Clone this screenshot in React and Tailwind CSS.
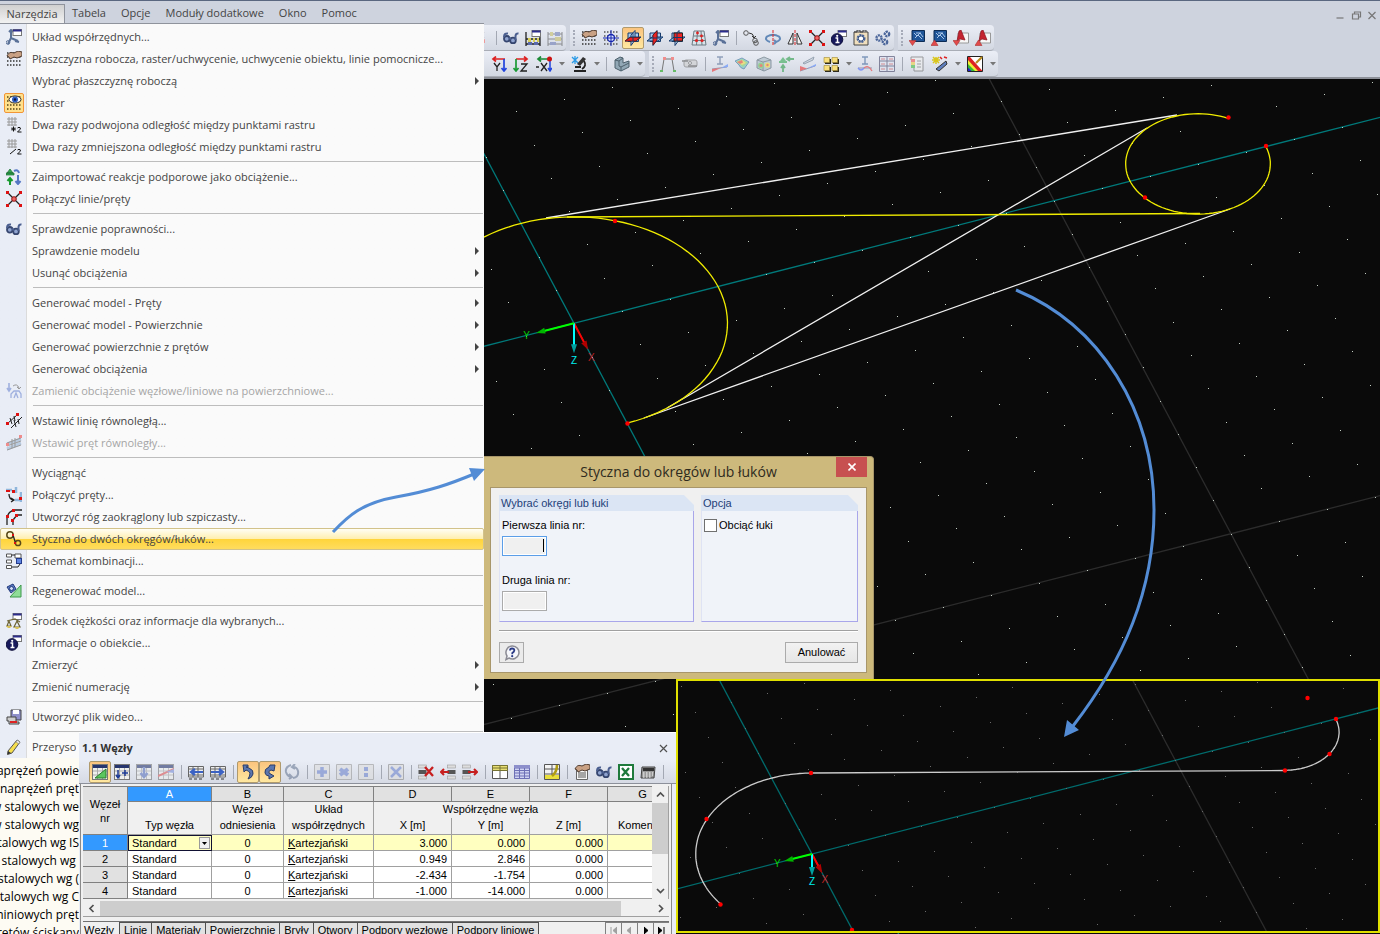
import { useState } from "react";

const menuBar = ["Tabela", "Opcje", "Moduły dodatkowe", "Okno", "Pomoc"];

const menuItems = [
  { label: "Układ współrzędnych...", icon: "axes" },
  {
    label: "Płaszczyzna robocza, raster/uchwycenie, uchwycenie obiektu, linie pomocnicze...",
    icon: "handGrid",
  },
  { label: "Wybrać płaszczyznę roboczą", sub: true },
  { label: "Raster", icon: "eyeGrid", checked: true },
  { label: "Dwa razy podwojona odległość między punktami rastru", icon: "gridDouble" },
  { label: "Dwa razy zmniejszona odległość między punktami rastru", icon: "gridHalf" },
  null,
  { label: "Zaimportować reakcje podporowe jako obciążenie...", icon: "importLoad" },
  { label: "Połączyć linie/pręty", icon: "joinLines" },
  null,
  { label: "Sprawdzenie poprawności...", icon: "glasses" },
  { label: "Sprawdzenie modelu", sub: true },
  { label: "Usunąć obciążenia", sub: true },
  null,
  { label: "Generować model - Pręty", sub: true },
  { label: "Generować model - Powierzchnie", sub: true },
  { label: "Generować powierzchnie z prętów", sub: true },
  { label: "Generować obciążenia", sub: true },
  {
    label: "Zamienić obciążenie węzłowe/liniowe na powierzchniowe...",
    icon: "convertLoad",
    disabled: true,
  },
  null,
  { label: "Wstawić linię równoległą...", icon: "parallelLine" },
  { label: "Wstawić pręt równoległy...", icon: "parallelMember", disabled: true },
  null,
  { label: "Wyciągnąć" },
  { label: "Połączyć pręty...", icon: "joinMembers" },
  { label: "Utworzyć róg zaokrąglony lub szpiczasty...", icon: "corner" },
  { label: "Styczna do dwóch okręgów/łuków...", icon: "tangent", selected: true },
  { label: "Schemat kombinacji...", icon: "scheme" },
  null,
  { label: "Regenerować model...", icon: "regenerate" },
  null,
  { label: "Środek ciężkości oraz informacje dla wybranych...", icon: "scales" },
  { label: "Informacje o obiekcie...", icon: "info" },
  { label: "Zmierzyć", sub: true },
  { label: "Zmienić numerację", sub: true },
  null,
  { label: "Utworzyć plik wideo...", icon: "video" },
  null,
  { label: "Przerysow", icon: "pencil", short: true },
];

const toolbarTop = [
  { items: ["cut", "|", "glasses", "abacusWindow", "abacus-"] },
  {
    grip: true,
    items: [
      "handGrid", "crossGrid", "planeXY!", "planeYZ", "planeXZ", "redGrid", "axes", "|",
      "copyCircles", "rotate", "mirror", "joinLines", "info", "gearBox", "gears",
    ],
  },
  { grip: true, items: ["blueDown", "blueUp", "redDown", "redUp"] },
];

const toolbarBottom = [
  { pad: true, items: ["axisY", "axisZ", "axisX>", "microscope>", "|", "solid>"] },
  {
    grip: true,
    items: [
      "frame", "camera-", "|", "beamLoad-", "surface-", "solidColor-", "supports-", "slope-",
      "squares>", "beamWave-", "resultGrid-", "|", "legend-", "wand>", "palette>",
    ],
  },
];

const tableToolbar = [
  "tblGreen!", "tblPlus", "tblDown-", "tblDiag-", "|", "tblLeft", "tblRight", "|", "undoArrow!",
  "redoArrow!", "refresh-", "|", "tblAdd-", "tblStar-", "tblDots-", "|", "tblX-", "|", "rowDelete",
  "rowLeft", "rowRight", "|", "tblYellow", "tblBlue", "|", "tblPen", "|", "handList", "glasses",
  "excel", "calculator", "|",
];

const nodes = [
  { nr: 1, x: "3.000", y: "0.000", z: "0.000" },
  { nr: 2, x: "0.949", y: "2.846", z: "0.000" },
  { nr: 3, x: "-2.434", y: "-1.754", z: "0.000" },
  { nr: 4, x: "-1.000", y: "-14.000", z: "0.000" },
];

const tabs = [
  "Linie", "Materiały", "Powierzchnie", "Bryły", "Otwory", "Podpory węzłowe", "Podpory liniowe",
];

const modules = [
  "naprężeń powie",
  "a naprężeń pręt",
  "w stalowych we",
  "w stalowych wg",
  "stalowych wg IS",
  "y stalowych wg\u00a0",
  "stalowych wg (",
  "stalowych wg C",
  "miniowych pręt",
  "retów ściskany",
];

const dotGrid = (color = "#333") => (
  <path
    d="M1 2H16M1 6H16M1 10H16M1 14H16"
    stroke={color}
    strokeWidth="1.4"
    strokeDasharray="1.5 1.5"
  />
);

const miniWindow = (
  <>
    <rect x="7" y="0.5" width="8.5" height="6" fill="#fff" stroke="#777" />
    <rect x="7" y="0.5" width="8.5" height="2" fill="#2c2c8c" />
  </>
);

const hand = (
  <path
    d="M1 5C3 1 5 1 8 2L12 0L16 1V5L11 7L8 6L4 8L3 6Z"
    fill="#c9a184"
    stroke="#4d3a2e"
    strokeWidth="1"
  />
);

const sheet = (
  <>
    <rect x="0.5" y="0.5" width="15" height="15" fill="#eef0ee" stroke="#777" />
    <path d="M1 7H15M1 11H15M5.5 4V15M10.5 4V15" stroke="#aaa" />
    <rect x="1" y="1" width="14" height="3" fill="#26356e" />
  </>
);

const plane = (
  <>
    <path d="M3 3H13.5V11.5H3Z" fill="#a9cdf0" stroke="#163b6d" />
    <path d="M6 5L10 0.5V10L6 15.5Z" fill="#c3def7" stroke="#163b6d" />
    <path d="M0 11L5 7H16L11 11Z" fill="#8dbceb" stroke="#163b6d" />
  </>
);

const solidShape = (
  <>
    <path d="M1 4L8 1L15 4V12L8 15L1 12Z" fill="#a8bac5" stroke="#556772" />
    <path d="M1 4L7 6L15 4M7 6V15" stroke="#556772" />
  </>
);

const rowBlock = (
  <>
    <rect x="0.5" y="1" width="8" height="3" fill="#ddd" stroke="#999" strokeWidth="0.6" />
    <rect x="0.5" y="6" width="8" height="4" fill="#555" />
    <rect x="0.5" y="12" width="8" height="3" fill="#ddd" stroke="#999" strokeWidth="0.6" />
  </>
);

const blueScreen = (
  <>
    <path d="M3 0.5H15.5V11.5H3Z" fill="#1f5598" stroke="#0d2c55" />
    <path d="M5 3L8 6L11 3L14 7M6 8L9 5L13 9M7 3H12" stroke="#b9d4f2" strokeWidth="0.9" />
  </>
);

const redScreen = (
  <>
    <path d="M5 3H15.5V13H5Z" fill="#f7f7f7" stroke="#999" />
    <path d="M6 1L8 0L12 10L7 9L4 11Z" fill="#c42430" stroke="#8c1420" strokeWidth="0.7" />
  </>
);

const icons = {
  axes: (
    <>
      <path d="M5 1V9L2 15M5 9L12 12M3 3L5 1L7 3M9 12L13 13" stroke="#5a7198" strokeWidth="2" />
      <circle cx="2" cy="13.5" r="1.8" stroke="#5a7198" />
      {miniWindow}
    </>
  ),
  handGrid: (
    <>
      {dotGrid()}
      {hand}
    </>
  ),
  eyeGrid: (
    <>
      {dotGrid("#5a4713")}
      <ellipse cx="9" cy="4.5" rx="6" ry="3.5" fill="#fff" stroke="#222" />
      <circle cx="9" cy="4.5" r="3" fill="#2f5fc4" />
      <circle cx="9" cy="4.5" r="1.2" fill="#0a1540" />
    </>
  ),
  gridDouble: (
    <>
      <path d="M3 0V9M6 0V9M9 0V9M1 2H11M1 5H11M1 8H11" stroke="#999" />
      <path d="M5 12H10M7.5 9.5V14.5M6 10.5L9 13.5M9 10.5L6 13.5" stroke="#111" />
      <path d="M11.5 11Q13 9.5 14.5 11Q14.5 12.5 11.5 15H15.5" stroke="#111" />
    </>
  ),
  gridHalf: (
    <>
      <path d="M3 0V9M6 0V9M9 0V9M1 2H11M1 5H11M1 8H11" stroke="#999" />
      <path d="M4 15L10 10" stroke="#111" />
      <path d="M11.5 11Q13 9.5 14.5 11Q14.5 12.5 11.5 15H15.5" stroke="#111" />
    </>
  ),
  importLoad: (
    <>
      <path d="M4 0L7 4H1ZM0 4H8V6H0Z" fill="#35a853" stroke="#1c6a30" strokeWidth="0.7" />
      <path d="M4 16V10M1.5 12L4 9L6.5 12" stroke="#179a2e" strokeWidth="2" />
      <path d="M8 2Q12 0 13 4M12 6V14M9.5 12L12 15L14.5 12" stroke="#5577c4" strokeWidth="2" />
    </>
  ),
  joinLines: (
    <>
      <path d="M2 2L14 14M14 2L2 14" stroke="#222" strokeWidth="1.3" />
      <path d="M0 0H3V3H0ZM13 0H16V3H13ZM0 13H3V16H0ZM13 13H16V16H13Z" fill="#d11" />
      <circle cx="8" cy="8" r="2.3" fill="#e66" stroke="#911" />
    </>
  ),
  glasses: (
    <>
      <circle cx="3.8" cy="8.8" r="2.8" fill="#8fa3cf" stroke="#36466f" strokeWidth="1.8" />
      <circle cx="10" cy="10.4" r="2.8" fill="#8fa3cf" stroke="#36466f" strokeWidth="1.8" />
      <path d="M1 7Q1 3 5 3.500M12.500 10V6Q13 3 15.500 3.500M6 8L8 9" stroke="#4b5f90" strokeWidth="2" />
    </>
  ),
  convertLoad: (
    <>
      <path d="M3 0V7M1 5L3 8L5 5" stroke="#9fb0df" strokeWidth="1.6" />
      <path d="M7 3Q11 0 13 5M11 4L13 6L15 4" stroke="#999" />
      <path d="M5 15V11L8 8H13L15 11V15M8 15L10 10L12 15" stroke="#9fb0df" strokeWidth="1.3" />
    </>
  ),
  parallelLine: (
    <>
      <path d="M1 11L11 2M5 15L16 4M4 5L6 11M8 3L9 8M8 7L10 14M12 6L13 11" stroke="#222" />
      <path d="M0 9H3V12H0ZM10 0H13V3H10Z" fill="#d11" />
    </>
  ),
  parallelMember: (
    <>
      <path d="M1 9L15 4M1 14L15 8" stroke="#b9cbe0" strokeWidth="3" />
      <path d="M1 8L15 3M1 11L15 6M1 15L15 10M6 4V13M9 3V12" stroke="#999" />
      <path d="M0 8H3V11H0ZM13 0H16V3H13Z" fill="#ee8c8c" />
    </>
  ),
  joinMembers: (
    <>
      <path d="M0 3H6M10 0V6M15 5V15M9 13H15" stroke="#8fb6dc" strokeWidth="2.5" />
      <path d="M0 3H4V5H0ZM6 3H9V6H6ZM13 10H16V13H13Z" fill="#d11" />
      <path d="M3 7Q3 12 7 13M5 11L8 13L5 15" stroke="#222" strokeWidth="1.3" />
    </>
  ),
  corner: (
    <>
      <path d="M1 16V9Q2 2 9 1H16M7 16V11L11 6H16" stroke="#222" strokeWidth="1.3" />
      <path d="M0 6H3V9H0ZM6 0H9V3H6ZM5 10H8V13H5ZM9 5H12V8H9Z" fill="#d11" />
    </>
  ),
  tangent: (
    <>
      <circle cx="4" cy="4" r="3.2" stroke="#5a4a18" strokeWidth="1.5" />
      <circle cx="12" cy="12" r="2.6" stroke="#5a4a18" strokeWidth="1.5" />
      <path d="M7 4L9.5 12" stroke="#222" strokeWidth="1.3" />
      <path d="M6 3H8V5H6ZM8 11H10V13H8Z" fill="#d11" />
    </>
  ),
  scheme: (
    <>
      <path
        d="M0.5 1H5.5V4H0.5ZM0.5 7H5.5V10H0.5ZM0.5 12.5H5.5V15.5H0.5ZM9 1H15V5H9Z"
        fill="#fff"
        stroke="#555"
      />
      <path d="M6 2H9M6 14H12L14 11" stroke="#222" />
      <rect x="10.5" y="5.5" width="5" height="5" fill="#5d83df" stroke="#223a8c" />
    </>
  ),
  regenerate: (
    <>
      <path d="M15 2V14H4Z" fill="#8fdc98" stroke="#3d9a4a" />
      <path d="M1 4L7 1L10 6L5 10Z" fill="#5b7bc4" stroke="#223a7c" />
      <circle cx="5.5" cy="5.5" r="2" fill="#cdd9f5" stroke="#223a7c" />
    </>
  ),
  scales: (
    <>
      {miniWindow}
      <path d="M1 8L9 6L14 9M3 8L1 13H5ZM11 8L8 14H14Z" stroke="#6d6436" strokeWidth="1.2" />
      <path d="M0 13H6L4 15H2ZM8 14H14L12 16H10Z" fill="#d8c258" />
    </>
  ),
  info: (
    <>
      {miniWindow}
      <circle cx="6" cy="9.5" r="5.8" fill="#17195c" stroke="#0b0c38" />
      <path d="M4.5 8H6.5V12.5M4.5 12.5H8.5" stroke="#fff" strokeWidth="1.5" />
      <circle cx="6.2" cy="5.8" r="1.1" fill="#fff" />
    </>
  ),
  video: (
    <>
      <path d="M5 1H15V11H5Z" fill="#8e8fc9" stroke="#444" />
      <path d="M7 1H13V5H7Z" fill="#fff" />
      <path d="M1 8H10V13H13V15H3V12H1Z" fill="#ccc" stroke="#444" />
      <path d="M4 12H11V14H4Z" fill="#d22" />
    </>
  ),
  pencil: (
    <>
      <path d="M2 12L11 1L14 3L6 14L1.5 15.5Z" fill="#f6de4d" stroke="#555" />
      <path d="M1.5 15.5L2 12L5 14Z" fill="#333" />
      <path d="M11 1L14 3L13 5L10 3Z" fill="#eee" stroke="#777" strokeWidth="0.6" />
    </>
  ),
  cut: (
    <>
      <path d="M0 2L4 8M4 2L0 8" stroke="#a99" />
      <path d="M0 12L5 9V13H0Z" fill="#e99" />
    </>
  ),
  abacusWindow: (
    <>
      <path d="M1 2V16M15 2V16M1 9H15M1 14H15" stroke="#222" strokeWidth="1.3" />
      <path d="M3 8H6V12H3ZM8 8H10V12H8ZM12 8H14V12H12Z" fill="#d8cf55" />
      <path d="M3 12H7V15H3ZM9 12H13V15H9Z" fill="#5968ad" />
      {miniWindow}
    </>
  ),
  abacus: (
    <>
      <path d="M1 2V16M15 2V16M1 4H15M1 9H15M1 14H15" stroke="#555" />
      <path d="M3 2H6V6H3ZM8 7H14V11H8Z" fill="#c6bd68" />
      <path d="M8 2H13V6H8ZM3 12H9V15H3Z" fill="#6f7db5" />
    </>
  ),
  crossGrid: (
    <>
      {dotGrid("#555")}
      <circle cx="8" cy="8" r="3.5" fill="#dfe7fb" stroke="#1726b0" strokeWidth="1.3" />
      <path d="M8 0V16M0 8H16" stroke="#1726b0" />
    </>
  ),
  planeXY: (
    <>
      {plane}
      <path d="M0 11L5 7.5H15L11 11Z" fill="#e22" stroke="#611" strokeWidth="0.8" />
      <path d="M8 3V12" stroke="#163b6d" />
    </>
  ),
  planeYZ: (
    <>
      {plane}
      <path d="M6 5L10 1V10L6 15Z" fill="#e22" stroke="#611" strokeWidth="0.8" />
      <path d="M3 8H14" stroke="#163b6d" />
    </>
  ),
  planeXZ: (
    <>
      {plane}
      <path d="M5 3H13.5V11H5Z" fill="#e22" stroke="#222" />
      <path d="M8 3V11M5 7.5H13" stroke="#163b6d" />
    </>
  ),
  redGrid: (
    <>
      <path d="M3 1H13L15 15H1ZM2.5 6H13.5M2 10.5H14.5M6.5 1L5.5 15M10 1L11 15" fill="#d9e4ea" stroke="#6c7b83" />
      <circle cx="6.5" cy="3" r="1.4" fill="#d22" />
      <circle cx="10.5" cy="6" r="1.4" fill="#d22" />
      <circle cx="5.5" cy="10.5" r="1.6" fill="#d22" />
      <circle cx="11" cy="10.5" r="1.6" fill="#d22" />
    </>
  ),
  copyCircles: (
    <>
      <circle cx="3" cy="3" r="2.3" stroke="#555" />
      <circle cx="12" cy="10.5" r="2.3" stroke="#555" />
      <circle cx="13" cy="13" r="2.3" stroke="#555" />
      <path d="M6 3Q10 3 11 7M9 6L11 8L13 6" stroke="#333" />
    </>
  ),
  rotate: (
    <>
      <path d="M5 12Q-1 10 2 6.5Q8 3 14 6.5Q17 10 11 12M9 10L11 12L9 14" stroke="#6289b8" strokeWidth="2" />
      <path d="M8 0V16" stroke="#d22" strokeDasharray="3 1" />
    </>
  ),
  mirror: (
    <>
      <path d="M6 3V14H1ZM10 3V14H15Z" fill="#f4f4f4" stroke="#333" />
      <path d="M8 0V16" stroke="#d22" strokeDasharray="3 1" />
    </>
  ),
  gearBox: (
    <>
      <path d="M1 2H15V15H1Z" fill="#f0dfbd" stroke="#444" />
      <path d="M1 2H4V0H7V2H10V0H13V2" stroke="#444" />
      <circle cx="8" cy="8.5" r="3.4" fill="#fff" stroke="#4a659a" strokeWidth="2.2" strokeDasharray="2 0.8" />
      <circle cx="8" cy="8.5" r="2.7" stroke="#35507f" />
    </>
  ),
  gears: (
    <>
      <circle cx="4" cy="8" r="2.6" stroke="#4a659a" strokeWidth="2.4" strokeDasharray="2 0.7" />
      <circle cx="12" cy="4" r="2.2" stroke="#4a659a" strokeWidth="2.4" strokeDasharray="2 0.7" />
      <circle cx="10" cy="12" r="2.2" stroke="#4a659a" strokeWidth="2.4" strokeDasharray="2 0.7" />
    </>
  ),
  blueDown: (
    <>
      {blueScreen}
      <path d="M0 10.5H7L3.5 15.5Z" fill="#e24a4a" stroke="#a33" strokeWidth="0.6" />
    </>
  ),
  blueUp: (
    <>
      {blueScreen}
      <path d="M0 15.5H7L3.5 10Z" fill="#e24a4a" stroke="#a33" strokeWidth="0.6" />
    </>
  ),
  redDown: (
    <>
      {redScreen}
      <path d="M0 10.5H7L3.5 15.5Z" fill="#e24a4a" stroke="#a33" strokeWidth="0.6" />
    </>
  ),
  redUp: (
    <>
      {redScreen}
      <path d="M0 15.5H7L3.5 10Z" fill="#e24a4a" stroke="#a33" strokeWidth="0.6" />
    </>
  ),
  axisY: (
    <>
      <path d="M14 3H3M5 0.5L2 3L5 5.5" stroke="#d22" strokeWidth="1.7" />
      <path d="M13 3V14M10.5 12L13 15L15.5 12" stroke="#24d" strokeWidth="1.7" />
      <path d="M3 7L6 11L9 7M6 11V15" stroke="#222" strokeWidth="1.3" />
    </>
  ),
  axisZ: (
    <>
      <path d="M3 3H13M11 0.5L14 3L11 5.5" stroke="#d22" strokeWidth="1.7" />
      <path d="M3 3V14M0.5 12L3 15L5.5 12" stroke="#1a9a35" strokeWidth="1.7" />
      <path d="M8 8H14L8 15H14" stroke="#222" strokeWidth="1.3" />
    </>
  ),
  axisX: (
    <>
      <path d="M13 3H3M5 0.5L2 3L5 5.5" stroke="#1a8a35" strokeWidth="1.7" />
      <path d="M14 3V14M12 12L14 15L16 12" stroke="#24d" strokeWidth="1.5" />
      <circle cx="13.5" cy="3" r="2.5" fill="#c11" />
      <path d="M0 11H3M5 7L11 15M11 7L5 15" stroke="#222" strokeWidth="1.3" />
    </>
  ),
  microscope: (
    <>
      <path d="M1 1L7 7M7 1L1 7M4 0V8" stroke="#2b9be6" strokeWidth="1.3" />
      <path d="M12 1L15 3L9 10L6 8Z" fill="#333" />
      <path d="M13 5Q16 10 11 13M3 15H15M4 11H10" stroke="#222" strokeWidth="1.8" />
    </>
  ),
  solid: (
    <>
      <path d="M1 4L6 1L9 2V7L15 5V11L7 15L1 12Z" fill="#91a7b5" stroke="#4d606c" />
      <path d="M1 4L5 5V10L7 11L15 7M7 11V15M5 5L9 2" stroke="#4d606c" />
    </>
  ),
  frame: (
    <>
      <path d="M2 15L4 3H12L14 15" stroke="#777" />
      <path d="M3 1H6V4H3ZM11 1H14V4H11Z" fill="#ee8d8d" />
      <path d="M0 14H3V16H0ZM13 14H16V16H13Z" fill="#6b6" />
    </>
  ),
  camera: (
    <>
      <rect x="2" y="4" width="13" height="7" rx="2" fill="#ccc" stroke="#777" />
      <path d="M0 5H6M6 10H15" stroke="#555" strokeWidth="1.5" />
      <circle cx="8" cy="7" r="1.5" fill="#eee" stroke="#666" />
    </>
  ),
  beamLoad: (
    <>
      <path d="M5 1H11M8 1V8M5 8H11" stroke="#5a7198" strokeWidth="1.4" />
      <path d="M0 13L15 11" stroke="#668" />
      <path d="M0 13L9 12L0 16Z" fill="#e33" />
      <path d="M9 12L16 8V11Z" fill="#58f" />
    </>
  ),
  surface: (
    <>
      <path d="M1 5L8 2L15 6L10 13Q6 12 5 9Z" fill="#6cc8c0" stroke="#3a6f9c" />
      <path d="M2.5 5.500L8 3L14 6.500L9 11Z" fill="#7fd06c" />
      <path d="M3 6L8 4L12 7L8 9Z" fill="#f2da3d" />
      <path d="M3 6L8 4L9 6.500L6 8Z" fill="#e8482f" />
    </>
  ),
  solidColor: (
    <>
      {solidShape}
      <circle cx="5" cy="9.5" r="3" fill="#5fc861" />
      <circle cx="5" cy="9.5" r="1.6" fill="#e94d2c" />
      <circle cx="11.5" cy="9" r="2.6" fill="#f1db31" />
      <circle cx="11.5" cy="9" r="1.2" fill="#e94d2c" />
    </>
  ),
  supports: (
    <>
      <path d="M5 1L8 5H2ZM1 5H9V7H1Z" fill="#35a853" />
      <path d="M5 16V10M3 12L5 9L7 12M16 3H10M12 1L9 3L12 5" stroke="#2c9c48" strokeWidth="1.8" />
    </>
  ),
  slope: (
    <>
      <path d="M3 7L14 1L13 4L4 8Z" fill="#c9d3de" stroke="#66788a" />
      <path d="M0 15L15 10" stroke="#668" />
      <path d="M0 10V15L7 12.5Z" fill="#e33" />
      <path d="M7 12.5L16 8V10Z" fill="#58f" />
    </>
  ),
  squares: (
    <>
      <path d="M2 3H8V8H2ZM10 3H16V8H10ZM2 11H8V16H2ZM10 11H16V16H10Z" fill="#2e2a1c" />
      <path
        d="M1 1.5H6.500V6.500H1ZM9 1.5H14.500V6.500H9ZM1 9.500H6.500V14.500H1ZM9 9.500H14.500V14.500H9Z"
        fill="#fae07c"
        stroke="#a08a34"
        strokeWidth="0.6"
      />
    </>
  ),
  beamWave: (
    <>
      <path d="M5 1H11M8 1V8M5 8H11" stroke="#3f669b" strokeWidth="1.4" />
      <path d="M1 12H15" stroke="#668" />
      <path d="M1 12Q4 16 7 12" stroke="#46f" strokeWidth="1.3" />
      <path d="M7 12Q11 8 15 15" stroke="#e33" strokeWidth="1.3" />
    </>
  ),
  resultGrid: (
    <>
      <path d="M0.5 0.5H15.5V15.5H0.5ZM0.5 5H15.5M0.5 10H15.5M8 0V16" fill="#dfe4f2" stroke="#446" />
      <path d="M2 3H6M10 3H14M2 8H6M10 8H14M2 13H6M10 13H14" stroke="#c55" />
    </>
  ),
  legend: (
    <>
      <path d="M2 1H14V15H5V4H2Z" fill="#eee" stroke="#666" />
      <path d="M2 3H6V6H2Z" fill="#e55" />
      <path d="M2 6H6V9H2Z" fill="#ec4" />
      <path d="M2 9H6V12H2Z" fill="#4b4" />
      <path d="M8 5H12M8 8H12M8 11H12" stroke="#777" />
    </>
  ),
  wand: (
    <>
      <path d="M4 1V8M0 4H8M1 1L7 7M7 1L1 7" stroke="#d9c61c" strokeWidth="1.5" />
      <path d="M4 13L14 5L15 8L7 15Z" fill="#5f7fc0" stroke="#333" />
      <path d="M8 1L10 3M12 1L15 2" stroke="#d22" strokeWidth="1.5" />
    </>
  ),
  palette: (
    <>
      <path d="M0.5 0.5H15.5V15.5H0.5Z" fill="#fff" stroke="#222" />
      <path d="M1 1H3L15.500 15H1Z" fill="#d22" />
      <path d="M1 4L11 15H1Z" fill="#ee3" />
      <path d="M1 8L8 15H1Z" fill="#3b3" />
      <path d="M1 11.500L4.500 15H1Z" fill="#22c" />
      <path d="M9 7L15 1" stroke="#b58a1e" strokeWidth="2.2" />
    </>
  ),
  tblGreen: (
    <>
      {sheet}
      <path d="M14 5V14H3Z" fill="#5bc65f" stroke="#2a7d2e" />
    </>
  ),
  tblPlus: (
    <>
      {sheet}
      <path d="M4 6V13M2 11L4 14L6 11M8 9H14M11 6V12" stroke="#1c3a94" strokeWidth="1.5" />
    </>
  ),
  tblDown: (
    <>
      {sheet}
      <path d="M8 3V12M4.5 9L8 13L11.5 9" stroke="#5c74bd" strokeWidth="2.5" />
    </>
  ),
  tblDiag: (
    <>
      {sheet}
      <path d="M0 12L16 5" stroke="#d55" strokeWidth="2" />
      <path d="M8 8L16 5V9Z" fill="#7b90d8" />
    </>
  ),
  tblLeft: (
    <>
      <path d="M0.5 2.5H15.5V13H0.5ZM1 5H15M1 11H15M5 2V13M10 2V13" fill="#eee" stroke="#666" />
      <path d="M15 8H5M7 5L3 8L7 11" stroke="#3b62c4" strokeWidth="2.2" />
      <path d="M1 15H4M6 15H9M11 15H14" stroke="#333" />
    </>
  ),
  tblRight: (
    <>
      <path d="M0.5 2.5H15.5V13H0.5ZM1 5H15M1 11H15M5 2V13M10 2V13" fill="#eee" stroke="#666" />
      <path d="M1 8H11M9 5L13 8L9 11" stroke="#3b62c4" strokeWidth="2.2" />
      <path d="M1 15H4M6 15H9M11 15H14" stroke="#333" />
    </>
  ),
  undoArrow: (
    <path
      d="M3 1H8V3H6L9 4Q14 6 13 10Q12 14 8 15Q10 12 10 9Q9 7 6 6L4 8Z"
      fill="#5b76ae"
      stroke="#2c3d68"
      strokeWidth="1"
    />
  ),
  redoArrow: (
    <path
      d="M13 1H8L7 3Q2 5 3 9Q4 12 7 12V15L12 12L7 9Q6 7 9 6L12 7Z"
      fill="#5b76ae"
      stroke="#2c3d68"
      strokeWidth="1"
    />
  ),
  refresh: (
    <path d="M7 1Q1 3 2 8Q3 12 7 13M5 10L8 13L5 15M9 14Q15 13 14 7Q13 3 9 3M11 0L8 3L11 5" stroke="#6b7b96" strokeWidth="2" />
  ),
  tblAdd: (
    <>
      <path d="M0.5 0.5H15.5V15.5H0.5Z" fill="#ddd" stroke="#999" />
      <path d="M8 3V13M3 8H13" stroke="#6d84cc" strokeWidth="3.5" />
    </>
  ),
  tblStar: (
    <>
      <path d="M0.5 0.5H15.5V15.5H0.5Z" fill="#ddd" stroke="#999" />
      <path d="M4 5L12 11M12 5L4 11" stroke="#6d84cc" strokeWidth="4" />
    </>
  ),
  tblDots: (
    <>
      <path d="M0.5 0.5H15.5V15.5H0.5Z" fill="#ddd" stroke="#999" />
      <path d="M8 3V7M8 9V13" stroke="#6d84cc" strokeWidth="4" />
    </>
  ),
  tblX: (
    <>
      <path d="M0.5 0.5H15.5V15.5H0.5Z" fill="#ddd" stroke="#888" />
      <path d="M3 3L13 13M13 3L3 13" stroke="#6d84cc" strokeWidth="2.5" />
    </>
  ),
  rowDelete: (
    <>
      {rowBlock}
      <path d="M7 3L15 12M15 3L7 12" stroke="#c71f1f" strokeWidth="2.3" />
    </>
  ),
  rowLeft: (
    <>
      <g transform="translate(7 0)">{rowBlock}</g>
      <path d="M9 8H2M4 5L1 8L4 11" stroke="#c71f1f" strokeWidth="2" />
    </>
  ),
  rowRight: (
    <>
      {rowBlock}
      <path d="M6 8H14M12 5L15 8L12 11" stroke="#c71f1f" strokeWidth="2" />
    </>
  ),
  tblYellow: (
    <>
      <path d="M0.5 1.5H15.5V14.5H0.5ZM8 6V14" fill="#fff" stroke="#555" />
      <path d="M0.5 1.5H15.5V6.5H0.5ZM8 2V6M1 4H15" fill="#e9df73" stroke="#777433" />
    </>
  ),
  tblBlue: (
    <>
      <path d="M0.5 1.5H15.5V14.5H0.5ZM1 4H15M1 6.5H15M1 9H15M1 12H15M5.5 2V14M10.5 2V14" fill="#cfd3f2" stroke="#6c6fb5" />
      <path d="M0 1H16V4H0Z" fill="#8c8fcb" />
    </>
  ),
  tblPen: (
    <>
      <path d="M0.5 0.5H15.5V15.5H0.5ZM1 5H15M1 10H15M8 1V15" fill="#f4f4f4" stroke="#555" />
      <path d="M1 11H15V15H1Z" fill="#e9df3c" />
      <path d="M13 1Q13 8 8 12" stroke="#b09c13" strokeWidth="2.6" />
    </>
  ),
  handList: (
    <>
      <path d="M2.5 4.5H13.5V15.5H2.5Z" fill="#f6f6f6" stroke="#666" />
      <path d="M4 9H12M4 11H12M4 13H12" stroke="#555" />
      {hand}
    </>
  ),
  excel: (
    <>
      <path d="M1 1H15V15H1Z" fill="#fff" stroke="#1f7a3c" strokeWidth="2" />
      <path d="M4 4L11 12M11 4L4 12" stroke="#1f7a3c" strokeWidth="2.3" />
    </>
  ),
  calculator: (
    <>
      <path d="M2 3H15L14 14H1Z" fill="#9a9a9a" stroke="#444" />
      <path d="M3 4H14V7H3Z" fill="#333" />
      <path d="M3 9H13M3 11H13M3 13H12" stroke="#fff" strokeDasharray="1.5 1.5" strokeWidth="1.2" />
    </>
  ),
};

const Icon = ({ name }) => (
  <svg viewBox="0 0 16 16" fill="none" className="h-4 w-4 shrink-0" aria-hidden="true">
    {icons[name]}
  </svg>
);

const Separator = () => (
  <span className="flex w-2 shrink-0 justify-center">
    <span className="h-[14px] w-px bg-[#a3a8b3]" />
  </span>
);

// A trailing mark sets the state: "!" pressed, "-" disabled, ">" has a drop-down.
const ToolButton = ({ item }) => {
  if (item === "|") return <Separator />;

  const name = item.replace(/[!\->]$/, "");
  const pressed = item.endsWith("!");
  const disabled = item.endsWith("-");

  if (item.endsWith(">")) {
    return (
      <span className="flex h-[22px] w-[35px] shrink-0 items-center">
        <button aria-label={name} className="flex w-6 justify-center">
          <Icon name={name} />
        </button>
        <button aria-label={`${name} menu`} className="flex w-[11px] justify-center">
          <svg viewBox="0 0 6 4" className="h-1 w-[6px]">
            <path d="M0 0H6L3 3.5Z" fill="#777" />
          </svg>
        </button>
      </span>
    );
  }

  return (
    <button
      aria-label={name}
      disabled={disabled}
      className={`flex h-[22px] shrink-0 items-center justify-center ${
        name === "cut" ? "w-2" : "w-[22px]"
      } ${
        pressed
          ? "rounded-xs border border-[#b09a6c] bg-linear-to-b from-[#fbc47e] to-[#ffe8a0]"
          : ""
      } ${disabled ? "opacity-60" : ""}`}
    >
      <Icon name={name} />
    </button>
  );
};

const Toolbar = ({ groups }) => (
  <div className="flex h-[26px] gap-1">
    {groups.map((group, i) => (
      <div
        key={i}
        className={`flex h-[26px] items-center rounded-r border-b border-[#a9adb6] bg-linear-to-b from-[#ebeef6] to-[#d3d8e2] ${
          group.pad ? "pl-1" : ""
        }`}
      >
        {group.grip && (
          <span className="flex w-2 justify-center">
            <span className="h-4 border-l-2 border-dotted border-[#a6abb8]" />
          </span>
        )}
        {group.items.map((item, j) => (
          <ToolButton key={j} item={item} />
        ))}
      </div>
    ))}
  </div>
);

const MenuItem = ({ item }) => {
  if (!item) {
    return (
      <li className="h-2 pt-[3px] pr-px pl-[33px]">
        <div className="h-px bg-[#bdbdbd]" />
      </li>
    );
  }

  return (
    <li className="h-[22px]">
      <button
        disabled={item.disabled}
        className={`flex h-[22px] w-full items-center text-left whitespace-nowrap ${
          item.selected
            ? "rounded-xs border border-[#d2c28a] bg-[linear-gradient(to_bottom,#fffef4,#ffefb0_48%,#ffd53c_52%,#ffdc5e)]"
            : ""
        } ${item.disabled ? "text-[#a5a5a5]" : ""}`}
      >
        <span
          className={`mr-2 flex h-5 w-5 items-center justify-center ${
            item.selected ? "ml-[3px]" : "ml-1"
          } ${item.checked ? "rounded-xs border border-[#f29536] bg-[#ffe08c]" : ""}`}
        >
          {item.icon && <Icon name={item.icon} />}
        </span>
        <span className={item.short ? "w-11 overflow-hidden" : "flex-1"}>{item.label}</span>
        {item.sub && (
          <svg viewBox="0 0 4 8" className="mr-[5px] h-2 w-1">
            <path d="M0 0L4 4L0 8Z" fill="#444" />
          </svg>
        )}
      </button>
    </li>
  );
};

const project = (view, x, y) => [
  view.origin[0] + x * view.ux[0] + y * view.uy[0],
  view.origin[1] + x * view.ux[1] + y * view.uy[1],
];

const arcPoints = (view, cy, r, from, to) => {
  const points = [];
  for (let i = 0; i <= 90; i++) {
    const t = ((from + ((to - from) * i) / 90) * Math.PI) / 180;
    const [px, py] = project(view, r * Math.cos(t), cy + r * Math.sin(t));
    points.push(`${px.toFixed(1)},${py.toFixed(1)}`);
  }
  return points.join(" ");
};

const mainView = { origin: [90, 244.3], ux: [17.7, 33.3], uy: [-48, 12.26] };
const resultView = { origin: [134, 173], ux: [13.48, 25.3], uy: [-36.33, 9.37] };

const Line = ({ view, from, to, color }) => {
  const [x1, y1] = project(view, ...from);
  const [x2, y2] = project(view, ...to);
  return <line x1={x1} y1={y1} x2={x2} y2={y2} stroke={color} strokeWidth="1.3" />;
};

const Raster = ({ view, color }) => {
  const dots = [];
  for (let x = -16; x <= 26; x++) {
    for (let y = -30; y <= 10; y++) {
      const [px, py] = project(view, x, y);
      if (px >= 0 && px < 1600 && py >= 0 && py < 1000) {
        dots.push(`M${Math.round(px)} ${Math.round(py)}h1v1h-1z`);
      }
    }
  }
  return <path d={dots.join("")} fill={color} shapeRendering="crispEdges" />;
};

const AxisArrow = ({ x, y, angle, length, color, dark }) => (
  <g transform={`translate(${x} ${y}) rotate(${angle})`}>
    <path d={`M0 0H${length - 7}`} stroke={color} strokeWidth="2" />
    <path d={`M${length - 9} -3L${length} 0L${length - 9} 3Z`} fill={dark} />
  </g>
);

const Axes = ({ view, size }) => {
  const [x, y] = view.origin;
  return (
    <g fontFamily="Liberation Sans" fontSize="10" textAnchor="middle">
      <AxisArrow x={x} y={y} angle={62} length={size} color="#f00" dark="#b00000" />
      <AxisArrow x={x} y={y} angle={90} length={size} color="#0ff" dark="#00a0a0" />
      <AxisArrow x={x} y={y} angle={165.7} length={size * 1.3} color="#0f0" dark="#00b400" />
      <text x={x - size * 1.58} y={y + size * 0.4 + 4} fill="#0c0">Y</text>
      <text x={x + size * 0.58} y={y + size * 1.12 + 4} fill="#c02020">X</text>
      <text x={x} y={y + size * 1.23 + 4} fill="#0ee">Z</text>
    </g>
  );
};

const Points = ({ points }) =>
  points.map(([x, y]) => <circle key={`${x}-${y}`} cx={x} cy={y} r="2.2" fill="#f00" />);

const ModelCanvas = () => (
  <svg className="absolute inset-0 h-full w-full" aria-label="Model">
    <Line view={mainView} from={[10, 12]} to={[10, -20]} color="#2c2c2c" />
    <Line view={mainView} from={[-10, -10]} to={[30, -10]} color="#2c2c2c" />
    <Line view={mainView} from={[-20, 0]} to={[20, 0]} color="#00797a" />
    <Line view={mainView} from={[0, 6]} to={[0, -24]} color="#00797a" />
    <Raster view={mainView} color="#c3cec3" />
    <g fill="none" stroke="#f0f0f0" strokeWidth="1.3">
      <path d="M62 139L693 36M183 329L663 49M160 339L746 130" />
    </g>
    <g fill="none" stroke="#f0ec00" strokeWidth="1.3">
      <path d="M83 138L716 134.5" />
      <polyline points={arcPoints(mainView, 0, 3, 0, -288.4)} />
      <polyline points={arcPoints(mainView, -13, 1.414, 225, -90)} />
    </g>
    <Points points={[[143.5, 344.5], [131, 142], [744.5, 38.5], [782, 67], [661, 118.5]]} />
    <Axes view={mainView} size={30} />
  </svg>
);

const ResultCanvas = () => (
  <svg className="block h-full w-full" aria-label="Wynik">
    <Line view={resultView} from={[-10, -10]} to={[30, -10]} color="#2c2c2c" />
    <Line view={resultView} from={[-20, 0]} to={[20, 0]} color="#006b6c" />
    <Line view={resultView} from={[0, 6]} to={[0, -30]} color="#006b6c" />
    <Raster view={resultView} color="#6a6a6a" />
    <g fill="none" stroke="#ccc" strokeWidth="1.3">
      <path d="M133 92L607 89.5" />
      <polyline points={arcPoints(resultView, 0, 3, 71.6, 199.9)} />
      <polyline points={arcPoints(resultView, -13, 1.414, -90, 19.9)} />
    </g>
    <Points
      points={[
        [133, 92], [28.5, 138], [42.5, 223.5], [174, 249],
        [607, 89.5], [651.5, 73], [658, 38], [629.5, 17],
      ]}
    />
    <Axes view={resultView} size={22} />
  </svg>
);

const Group = ({ title, className, children }) => (
  <fieldset className={`min-w-0 ${className}`}>
    <legend className="block h-4 w-full bg-[#dbe5f4] pl-[2px] leading-4 text-[#1e3f78] [clip-path:polygon(0_0,calc(100%-10px)_0,100%_10px,100%_100%,0_100%)]">
      {title}
    </legend>
    <div className="h-[111px] border-r border-b border-l border-[#a9a6ea] border-l-[#dfe3f4] bg-[#f0f3f9] pt-[6px] pl-[2px]">
      {children}
    </div>
  </fieldset>
);

const TangentDialog = ({ onClose }) => {
  const [lines, setLines] = useState({ first: "", second: "" });
  const [trim, setTrim] = useState(false);

  const handleChange = (e) => {
    const { name, value } = e.target;
    setLines((prev) => ({ ...prev, [name]: value }));
  };

  return (
    <div
      role="dialog"
      className="absolute top-[377px] left-0 w-[390px] rounded-tr border-t border-r border-[#a8966a] bg-[#cdb97c] px-[6px] pb-[6px] font-['Liberation_Sans',sans-serif] text-[11px] text-black"
    >
      <div className="flex h-[30px] items-start">
        <h2 className="flex-1 pl-[31px] text-center font-['Open_Sans',sans-serif] text-[14px] leading-[30px] text-[#2f2b1e]">
          Styczna do okręgów lub łuków
        </h2>
        <button
          onClick={onClose}
          aria-label="Zamknij"
          className="flex h-5 w-[31px] items-center justify-center bg-[#c75050]"
        >
          <svg viewBox="0 0 8 8" className="h-2 w-2">
            <path d="M0.5 0.5L7.5 7.5M7.5 0.5L0.5 7.5" stroke="#fff" strokeWidth="1.6" />
          </svg>
        </button>
      </div>

      <div className="border border-[#a8966a] bg-[#f0f0f0] px-2 pt-[7px] pb-[9px]">
        <div className="flex gap-[7px]">
          <Group title="Wybrać okręgi lub łuki" className="w-[195px]">
            <label htmlFor="first" className="block leading-4">
              Pierwsza linia nr:
            </label>
            <div className="relative mt-[3px] w-[45px]">
              <input
                id="first"
                name="first"
                value={lines.first}
                onChange={handleChange}
                className="block h-5 w-full border border-[#5b9ee8] bg-[#f0f0f0] px-[3px] text-right caret-transparent inset-ring inset-ring-white outline-none"
              />
              <span className="pointer-events-none absolute top-[3px] right-[3px] h-[13px] w-px bg-black" />
            </div>
            <label htmlFor="second" className="mt-4 block leading-4">
              Druga linia nr:
            </label>
            <input
              id="second"
              name="second"
              value={lines.second}
              onChange={handleChange}
              className="mt-[3px] block h-5 w-[45px] border border-[#ababab] bg-[#f0f0f0] px-[3px] text-right inset-ring inset-ring-white outline-none"
            />
          </Group>
          <Group title="Opcja" className="flex-1">
            <label className="flex items-center gap-[2px] leading-4">
              <input
                type="checkbox"
                checked={trim}
                onChange={(e) => setTrim(e.target.checked)}
                className="h-[13px] w-[13px] appearance-none border border-[#707070] bg-white checked:bg-[#5b9ee8]"
              />
              Obciąć łuki
            </label>
          </Group>
        </div>

        <div className="mt-2 h-[2px] border-t border-[#a0a0a0] bg-white" />

        <div className="mt-[10px] flex justify-between">
          <button
            aria-label="Pomoc"
            className="flex h-[21px] w-[25px] items-center justify-center border border-[#ababab] bg-[#ebebeb]"
          >
            <svg viewBox="0 0 16 16" fill="none" className="h-4 w-4">
              <path d="M8 1A6.5 6.5 0 1 1 5 13L2 14.5L3 11A6.5 6.5 0 0 1 8 1Z" fill="#f6f7fb" stroke="#8b8b94" strokeWidth="1.5" />
              <path d="M6 5.5Q6 3.5 8 3.5Q10.5 3.5 10.3 5.5Q10 7 8.3 8V9.2" stroke="#2a3a86" strokeWidth="1.8" />
              <circle cx="8.2" cy="11.2" r="1.1" fill="#2a3a86" />
            </svg>
          </button>
          <button
            onClick={onClose}
            className="h-[21px] w-[73px] border border-[#ababab] bg-linear-to-b from-[#f2f2f2] to-[#e6e6e6]"
          >
            Anulować
          </button>
        </div>
      </div>
    </div>
  );
};

const Chevron = ({ d, width = "1.7" }) => (
  <svg viewBox="0 0 9 9" fill="none" className="h-[9px] w-[9px]">
    <path d={d} stroke="#505050" strokeWidth={width} />
  </svg>
);

const columnHead = "border-r border-b border-[#808080] bg-[#e1e1e1] font-normal";
const cell = "border-r border-b border-[#a0a0a0]";

const NodeTable = () => (
  <table className="w-[595px] table-fixed border-separate border-spacing-0 text-center leading-[14px]">
    <colgroup>
      <col className="w-[45px]" />
      <col className="w-[84px]" />
      <col className="w-[72px]" />
      <col className="w-[90px]" />
      <col className="w-[78px]" />
      <col className="w-[78px]" />
      <col className="w-[78px]" />
      <col />
    </colgroup>
    <thead>
      <tr className="h-[14px]">
        <th rowSpan="3" className={columnHead}>
          Węzeł
          <br />
          nr
        </th>
        <th className="border-r border-b border-[#808080] bg-[#3399ff] font-normal text-white">A</th>
        {["B", "C", "D", "E", "F", "G"].map((letter) => (
          <th key={letter} className={columnHead}>
            {letter}
          </th>
        ))}
      </tr>
      <tr className="h-4 bg-[#f0f0f0] align-top">
        <th className="border-r border-[#a0a0a0]" />
        <th className="border-r border-[#a0a0a0] font-normal">Węzeł</th>
        <th className="border-r border-[#a0a0a0] font-normal">Układ</th>
        <th colSpan="3" className="border-r border-[#a0a0a0] font-normal">
          Współrzędne węzła
        </th>
        <th />
      </tr>
      <tr className="h-[17px] bg-[#f0f0f0] align-top">
        {["Typ węzła", "odniesienia", "współrzędnych", "X [m]", "Y [m]", "Z [m]"].map((text) => (
          <th key={text} className={`${cell} font-normal`}>
            {text}
          </th>
        ))}
        <th className="border-b border-[#a0a0a0] pl-[10px] text-left font-normal whitespace-nowrap">
          Koment
        </th>
      </tr>
    </thead>
    <tbody>
      {nodes.map((node) => {
        const active = node.nr === 1;
        return (
          <tr key={node.nr} className={`h-4 ${active ? "bg-[#ffffc0]" : "bg-white"}`}>
            <th
              className={`border-r border-b border-[#808080] font-normal ${
                active ? "bg-[#3399ff] text-white" : "bg-[#e1e1e1]"
              }`}
            >
              {node.nr}
            </th>
            <td className={active ? "border border-[#111133]" : cell}>
              <span className={`flex items-center justify-between ${active ? "pl-[3px]" : "pl-1"}`}>
                Standard
                {active && (
                  <button
                    aria-label="Typ węzła"
                    className="mr-px flex h-3 w-[11px] items-center justify-center border border-[#999] bg-[#f0f0f0]"
                  >
                    <svg viewBox="0 0 5 3" className="h-[3px] w-[5px]">
                      <path d="M0 0H5L2.5 3Z" fill="#000" />
                    </svg>
                  </button>
                )}
              </span>
            </td>
            <td className={cell}>0</td>
            <td className={`${cell} pl-1 text-left`}>
              <u>K</u>artezjański
            </td>
            <td className={`${cell} pr-1 text-right`}>{node.x}</td>
            <td className={`${cell} pr-1 text-right`}>{node.y}</td>
            <td className={`${cell} pr-1 text-right`}>{node.z}</td>
            <td className="border-b border-[#a0a0a0]" />
          </tr>
        );
      })}
    </tbody>
  </table>
);

const tabArrows = [
  { d: "M8 1L4 4.5L8 8M2 1V8" },
  { d: "M6 1L2 4.5L6 8" },
  { d: "M3 1L7 4.5L3 8", enabled: true },
  { d: "M1 1L5 4.5L1 8M7 1V8", enabled: true },
];

const TablePanel = () => (
  <section className="absolute bottom-0 left-[79px] flex h-[202px] w-[597px] flex-col overflow-hidden border-t border-white bg-[#e9edf6] font-['Liberation_Sans',sans-serif] text-[11px] text-black">
    <div className="flex h-[27px] shrink-0 items-center justify-between pt-[3px] pr-2 pl-[3px]">
      <h2 className="font-['Open_Sans',sans-serif] font-bold text-[#333]">1.1 Węzły</h2>
      <button aria-label="Zamknij tabelę">
        <Chevron d="M1 1L8 8M8 1L1 8" width="1.2" />
      </button>
    </div>
    <div className="flex h-6 shrink-0 items-center border-b border-[#8c909a] bg-linear-to-b from-[#e9edf6] to-[#d6dae4] pl-[10px]">
      {tableToolbar.map((item, i) => (
        <ToolButton key={i} item={item} />
      ))}
    </div>

    <div className="mr-1 ml-px flex min-h-0 flex-1 flex-col border-r border-l border-[#8a8a8a] bg-[#f0f0f0] pt-[2px] pr-[2px] pl-[2px]">
      <div className="flex h-[113px] shrink-0">
        <div className="min-w-0 flex-1 overflow-hidden border-t border-[#808080]">
          <NodeTable />
        </div>
        <div className="flex w-[17px] flex-col items-center border-r border-[#a0a0a0]">
          <span className="flex h-[17px] items-center">
            <Chevron d="M1 6.5L4.5 3L8 6.5" />
          </span>
          <span className="h-[51px] w-full bg-[#cdcdcd]" />
          <span className="mt-auto flex h-[17px] items-center">
            <Chevron d="M1 3L4.5 6.5L8 3" />
          </span>
        </div>
      </div>
      <div className="mt-[2px] flex h-4 shrink-0 items-center border-b border-[#a0a0a0]">
        <span className="flex w-[17px] justify-center">
          <Chevron d="M6.5 1L3 4.5L6.5 8" />
        </span>
        <span className="mr-[31px] h-full flex-1 bg-[#cdcdcd]" />
        <span className="flex w-[17px] justify-center">
          <Chevron d="M3 1L6.5 4.5L3 8" />
        </span>
      </div>
      <div className="mt-1 flex shrink-0 border-t border-[#707070]">
        <button className="pr-[5px] pl-px leading-[14px]">Węzły</button>
        {tabs.map((tab) => (
          <button
            key={tab}
            className="border-t border-l border-[#505050] bg-[#e1e1e1] px-[4px] leading-[14px] whitespace-nowrap last-of-type:border-r"
          >
            {tab}
          </button>
        ))}
        <span className="ml-auto flex">
          {tabArrows.map(({ d, enabled }) => (
            <span
              key={d}
              className="flex w-4 items-center justify-center border-t border-l border-[#808080] bg-[#f0f0f0]"
            >
              <svg viewBox="0 0 9 9" className="h-[9px] w-[9px]">
                <path d={d} fill={enabled ? "#000" : "#a0a0a0"} stroke={enabled ? "#000" : "#a0a0a0"} />
              </svg>
            </span>
          ))}
        </span>
      </div>
    </div>
  </section>
);

const Arrows = () => (
  <svg className="pointer-events-none absolute inset-0 h-full w-full" aria-hidden="true">
    <g fill="none" stroke="#538cd5" strokeWidth="3">
      <path d="M333 532C348 516 362 503 396 497C430 491 450 484 474 474" />
      <path d="M1016 290C1100 325 1154 410 1154 510C1154 590 1124 660 1073 726" />
    </g>
    <path d="M485 469L469 468L474 481ZM1064 737L1067 720L1079 730Z" fill="#538cd5" />
  </svg>
);

const App = () => {
  const [dialogOpen, setDialogOpen] = useState(true);

  return (
    <div className="relative flex min-h-screen flex-col overflow-hidden bg-[#ced3de] font-['Open_Sans',sans-serif] text-[11px] text-[#444]">
      <header className="flex h-6 items-stretch border-t border-[#5a6780]">
        <nav className="flex w-[484px] items-stretch border-b border-[#8f939c] pt-[3px]">
          <button className="w-[65px] border-t border-r border-[#8f939c] bg-linear-to-b from-[#d0d0d0] to-[#f2f2f2]">
            Narzędzia
          </button>
          {menuBar.map((label) => (
            <button key={label} className="pr-2 pl-[7px]">
              {label}
            </button>
          ))}
        </nav>
        <div className="ml-auto flex items-end gap-1 pr-[2px] pb-1">
          {["M1 7H8", "M1 3H7V8H1ZM3 3V1H9V6H7", "M1 1L8 8M8 1L1 8"].map((d) => (
            <button key={d} aria-label="Okno">
              <svg viewBox="0 0 9 9" fill="none" className="h-[9px] w-3">
                <path d={d} stroke="#777" strokeWidth="1.2" />
              </svg>
            </button>
          ))}
        </div>
      </header>

      <div className="border-b-2 border-[#8d9098] pt-px pl-[484px]">
        <Toolbar groups={toolbarTop} />
        <Toolbar groups={toolbarBottom} />
      </div>

      <main className="flex flex-1">
        <aside className="flex w-[484px] flex-col justify-end overflow-hidden bg-[#fdfbf3] text-[12px] text-black">
          <ul className="-mb-2 w-[79px]">
            {modules.map((name, i) => (
              <li key={i} className="flex h-[18px] items-center justify-end whitespace-nowrap">
                {name}
              </li>
            ))}
          </ul>
        </aside>
        <div className="relative flex-1 overflow-hidden bg-[#0a0a0a]">
          <ModelCanvas />
          {dialogOpen && <TangentDialog onClose={() => setDialogOpen(false)} />}
        </div>
      </main>

      <ul className="absolute top-6 left-0 w-[484px] bg-[#fafafa] bg-linear-to-r from-[#e9edf6] from-[26px] via-[#bdbdbd] via-[26px] to-[#fafafa] to-[27px] pt-[2px]">
        {menuItems.map((item, i) => (
          <MenuItem key={i} item={item} />
        ))}
      </ul>

      <TablePanel />
      <section className="absolute right-0 bottom-px left-[676px] h-[254px] border-2 border-[#e0e000] bg-[#0a0a0a]">
        <ResultCanvas />
      </section>
      <Arrows />
    </div>
  );
};

export default App;
